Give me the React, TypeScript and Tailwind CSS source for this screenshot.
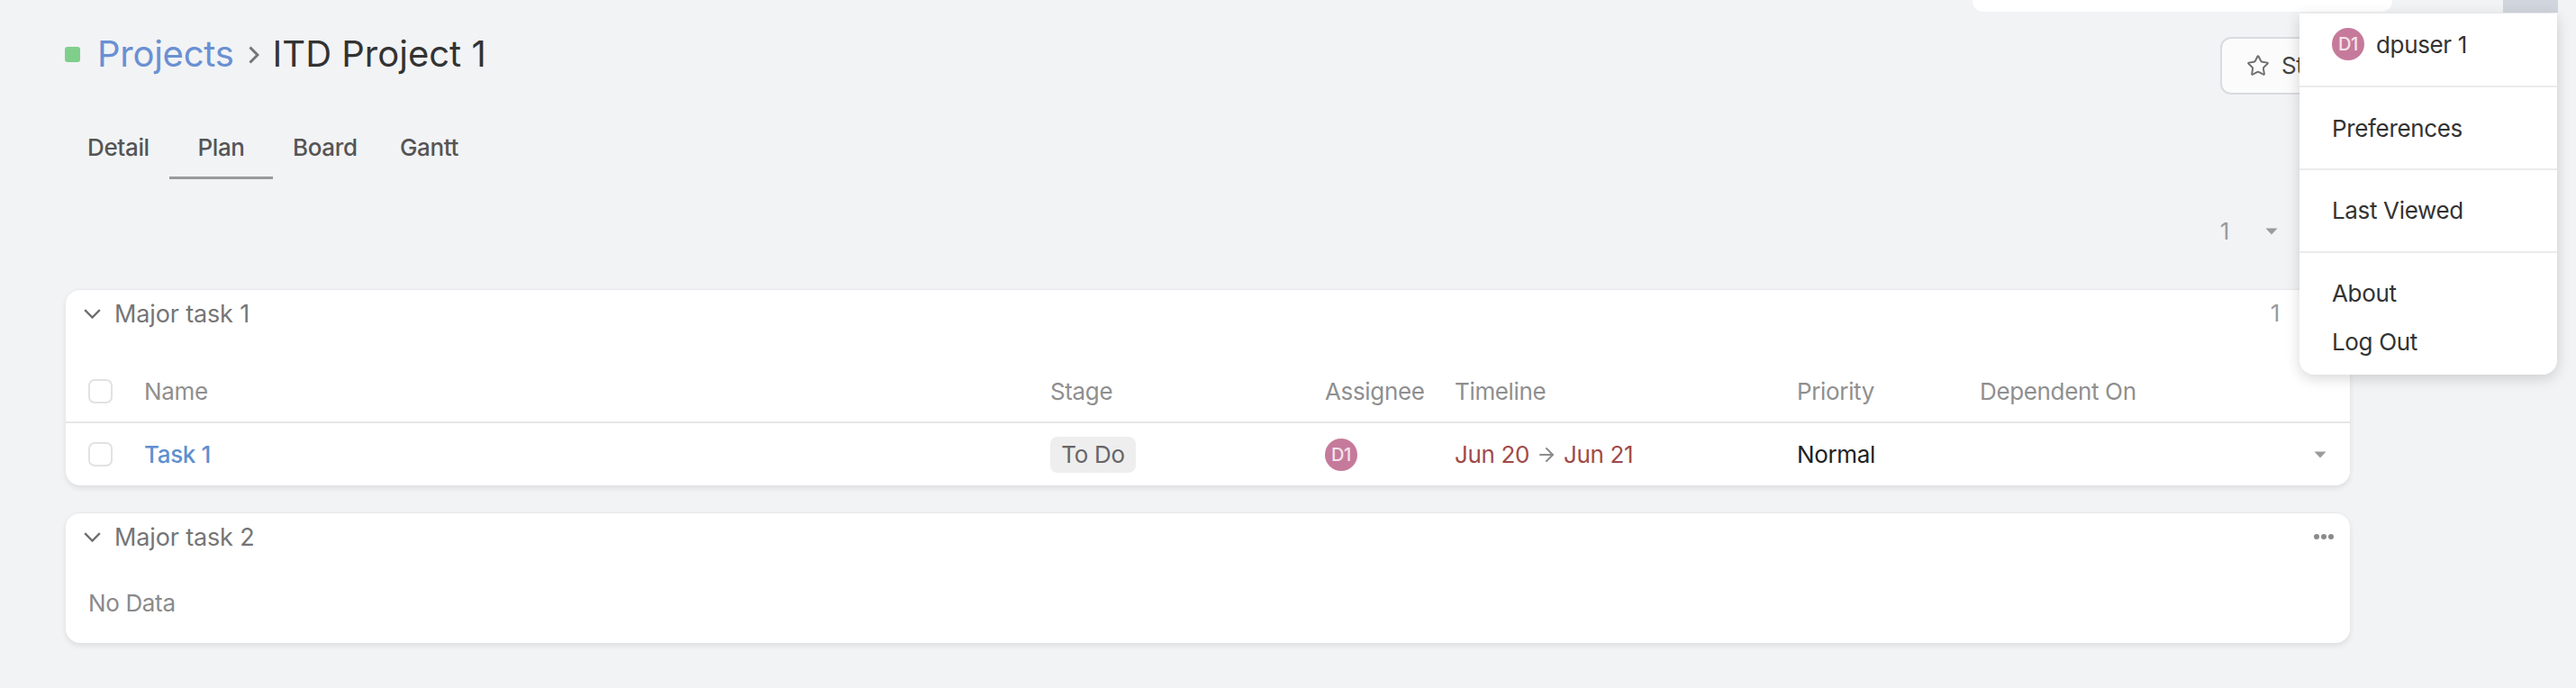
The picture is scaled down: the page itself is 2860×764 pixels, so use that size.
import { ArrowRight, Star } from "lucide-react";

function Caret() {
  return (
    <svg width="14" height="8" viewBox="0 0 14 8" className="block">
      <path d="M0.5 0.5h13L7 7.5z" fill="#9b9b9b" />
    </svg>
  );
}

function Avatar() {
  return (
    <span className="flex h-[36px] w-[36px] shrink-0 items-center justify-center rounded-full bg-[#c67a9b] text-[20px] font-medium text-[#f4e4eb]">
      D1
    </span>
  );
}

function Check() {
  return <span className="block h-[27px] w-[27px] rounded-[7px] border-2 border-[#e2e2e2] bg-white" />;
}

const rowGrid = "grid grid-cols-[87px_1006px_305px_144px_380px_203px_1fr] items-center";

function CardHead({ title, right }: { title: string; right: React.ReactNode }) {
  return (
    <div className="flex h-[52px] items-center pl-[20px] pr-[18px]">
      <svg width="19" height="11" viewBox="0 0 19 11" fill="none" className="block">
        <path d="M1.2 1.2L9.5 9.5L17.8 1.2" stroke="#6f6f6f" strokeWidth="2.4" />
      </svg>
      <span className="ml-[15px] text-[27px] tracking-[-0.15px] text-[#757575]">{title}</span>
      <div className="ml-auto">{right}</div>
    </div>
  );
}

export default function App() {
  return (
    <div className="relative h-[764px] w-full overflow-hidden bg-[#f2f3f5] font-['Inter',sans-serif] text-[26px] leading-none tracking-[-0.35px]">
      <div className="flex h-[14px] justify-end pr-[20px]">
        <div className="mr-[123px] h-[13px] w-[466px] rounded-b-[12px] bg-white" />
        <div className="h-[14px] w-[61px] bg-[#d1d6de]" />
      </div>

      <div className="pl-[72px] pr-[251px]">
        <div className="flex h-[91px] items-start">
          <div className="mt-[26px] flex items-center">
            <span className="h-[17px] w-[17px] rounded-[3px] bg-[#7fcf8b]" />
            <span className="ml-[19px] text-[40px] tracking-[-0.25px] text-[#6a90d2]">Projects</span>
            <svg width="12" height="20" viewBox="0 0 12 20" fill="none" className="ml-[16px] mt-[2px] block">
              <path d="M1.5 1.5L10 10L1.5 18.5" stroke="#757575" strokeWidth="3" />
            </svg>
            <span className="ml-[15px] text-[40px] tracking-normal text-[#333333]">ITD Project 1</span>
          </div>
          <div className="ml-auto mt-[27px] flex h-[64px] w-[144px] items-center rounded-[12px] border-2 border-[#d9dbe0] bg-[#fbfbfc] pl-[27px]">
            <Star className="h-[26px] w-[26px] text-[#6f6f6f]" strokeWidth={1.8} />
            <span className="ml-[13px] text-[#444444]">Star</span>
          </div>
        </div>

        <div className="mt-[24px] flex h-[70px] items-stretch text-[#555555]">
          <div className="flex w-[116px] pl-[25px] pt-[22px] font-medium">Detail</div>
          <div className="flex w-[115px] justify-center border-b-[3px] border-[#9a9a9a] pt-[22px] font-medium">Plan</div>
          <div className="ml-[22px] flex w-[119px] pt-[22px] font-medium">Board</div>
          <div className="flex pt-[22px] font-medium">Gantt</div>
        </div>

        <div className="mt-[45px] flex h-[26px] items-center justify-end pr-[80px] text-[#9a9a9a]">
          <span>1</span>
          <span className="ml-[40px]"><Caret /></span>
        </div>

        <div className="ml-[1px] mt-[51px] h-[218px] rounded-[16px] border-t border-[#e8e9ec] bg-white shadow-[0_3px_6px_rgba(0,0,0,0.09)]">
          <CardHead title="Major task 1" right={<span className="mr-[60px] text-[#9a9a9a]">1</span>} />
          <div className={`${rowGrid} mt-[43px] h-[53px] border-b-2 border-[#e6e6e6] pb-[16px] text-[#8f8f8f]`}>
            <div className="pl-[25px]"><Check /></div>
            <div>Name</div>
            <div>Stage</div>
            <div>Assignee</div>
            <div>Timeline</div>
            <div>Priority</div>
            <div>Dependent On</div>
          </div>
          <div className={`${rowGrid} h-[69px]`}>
            <div className="pl-[25px]"><Check /></div>
            <div className="font-medium text-[#5f8fd0]">Task 1</div>
            <div>
              <span className="inline-flex h-[40px] w-[95px] items-center justify-center rounded-[8px] bg-[#eeeeee] text-[#666666]">To Do</span>
            </div>
            <div><Avatar /></div>
            <div className="flex items-center text-[#a04a48]">
              Jun 20
              <ArrowRight className="mx-[7px] h-[24px] w-[24px] text-[#8c8c8c]" strokeWidth={2} />
              Jun 21
            </div>
            <div className="text-[#222222]">Normal</div>
            <div className="flex justify-end pr-[26px]"><Caret /></div>
          </div>
        </div>

        <div className="ml-[1px] mt-[30px] h-[145px] rounded-[16px] border-t border-[#e8e9ec] bg-white shadow-[0_3px_6px_rgba(0,0,0,0.09)]">
          <CardHead
            title="Major task 2"
            right={
              <svg width="22" height="6" viewBox="0 0 22 6" className="block">
                <circle cx="3" cy="3" r="3" fill="#8a8a8a" />
                <circle cx="11" cy="3" r="3" fill="#8a8a8a" />
                <circle cx="19" cy="3" r="3" fill="#8a8a8a" />
              </svg>
            }
          />
          <div className="mt-[35px] pl-[25px] text-[#8a8a8a]">No Data</div>
        </div>
      </div>

      <div className="absolute left-[2553px] top-[15px] w-[286px] rounded-b-[16px] bg-white text-[#333333] shadow-[0_4px_16px_rgba(0,0,0,0.16)]">
        <div className="flex h-[82px] items-start border-b-2 border-[#ebebeb] pl-[36px] pt-[16px]">
          <Avatar />
          <span className="ml-[13px] mt-[6px]">dpuser 1</span>
        </div>
        <div className="flex h-[92px] items-center border-b-2 border-[#ebebeb] pl-[36px] pt-[2px]">Preferences</div>
        <div className="flex h-[92px] items-center border-b-2 border-[#ebebeb] pl-[36px]">Last Viewed</div>
        <div className="h-[135px] pl-[36px] pt-[32px]">
          <div>About</div>
          <div className="mt-[28px]">Log Out</div>
        </div>
      </div>
    </div>
  );
}
